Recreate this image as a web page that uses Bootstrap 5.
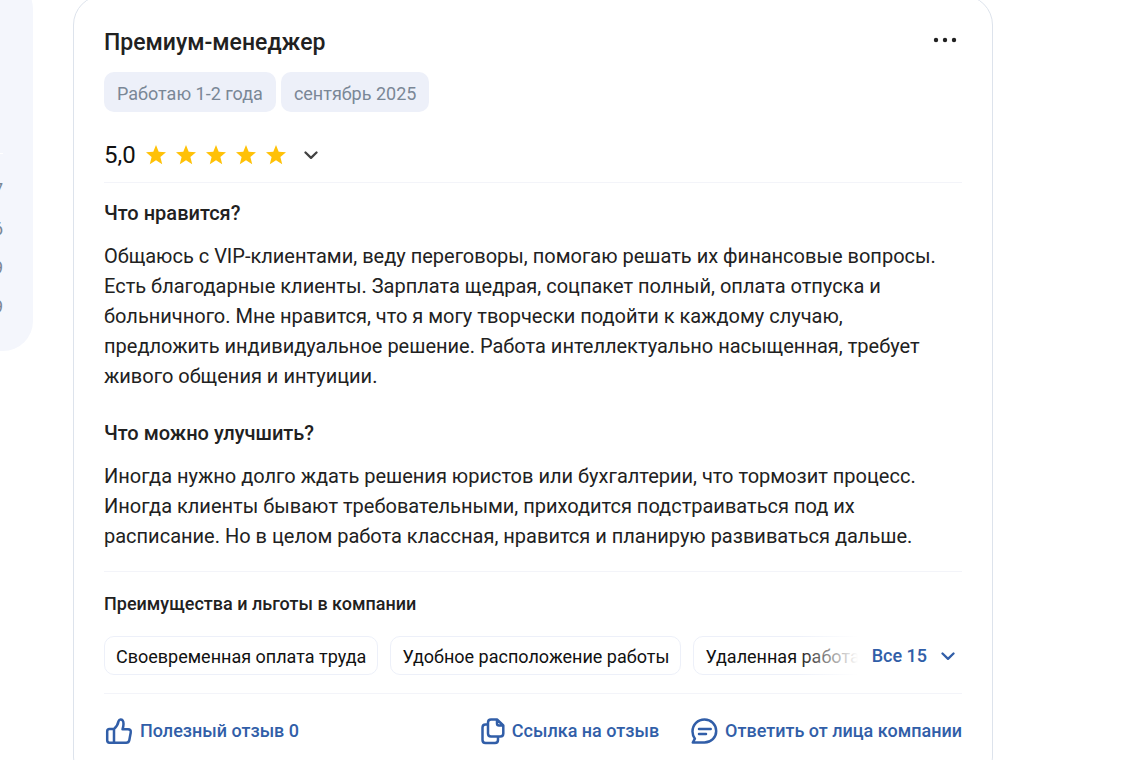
<!DOCTYPE html>
<html lang="ru">
<head>
<meta charset="utf-8">
<meta name="viewport" content="width=device-width, initial-scale=1">
<title>Премиум-менеджер — отзыв о работе</title>
<link href="https://cdn.jsdelivr.net/npm/bootstrap@5.3.0/dist/css/bootstrap.min.css" rel="stylesheet">
<style>
body { font-family: Roboto, "Liberation Sans", sans-serif; font-size: 20px; line-height: 30px; color: #212121; background: #fff; overflow: hidden; height: 100vh; }
.page { gap: 40px; padding-right: 147px; }
.side-panel { width: 300px; height: 372px; margin: -21px 0 0 -267px; padding: 0 30px 25px; background: #f4f6fc; border-radius: 30px; font-size: 18px; line-height: 39px; color: #7a8796; }
.side-first { border-top: 1px solid #fff; padding-top: 16px; }
.review { min-width: 0; margin-top: -5px; padding: 32px 30px 40px; border: 1px solid #dde3ec; border-radius: 30px; }
.review-title { font-size: 23px; line-height: 30px; font-weight: 500; }
.tag { padding: 7px 13px 3px; height: 40px; border-radius: 10px; background: #edf0f9; color: #7a8796; font-size: 18px; }
.tags { gap: 5px; margin-top: 14px; }
.rating { margin-top: 28px; padding-bottom: 12px; gap: 10px; }
.score { font-size: 24px; color: #111; }
.stars { gap: 10px; }
.ruled { border-bottom: 1px solid #f3f4f9; }
.section-title { font-size: 20px; line-height: 30px; font-weight: 500; margin: 15px 0 13px; }
.second { margin-top: 27px; }
.last-text { padding-bottom: 20px; }
.perks-title { font-size: 18px; line-height: 24px; font-weight: 500; margin: 20px 0; }
.perks-row { gap: 14px; padding-bottom: 18px; }
.perks { gap: 12px; height: 39px; min-width: 0; }
.perk { height: 39px; padding: 5px 11px 0; border: 1px solid #edf0f9; border-radius: 10px; font-size: 18px; color: #111; white-space: nowrap; flex: none; }
.perks-fade { position: absolute; inset: 0 0 0 auto; width: 62px; background: linear-gradient(90deg, #fff0, #fffc 80%, #fff); }
.action { border: 0; padding: 0; background: none; color: #315ea8; font-size: 18px; line-height: 30px; font-weight: 500; text-decoration: none; white-space: nowrap; }
.all-perks { gap: 14px; padding-right: 7px; }
.more { height: 24px; line-height: 24px; }
.scores-toggle { color: #424242; padding-left: 8px; }
.actions { margin-top: 22px; gap: 30px; }
.actions .action { display: flex; align-items: center; gap: 6px; }
svg { display: block; flex: none; }
.line-icon { fill: none; stroke: currentColor; stroke-width: 2.5; stroke-linecap: round; stroke-linejoin: round; }
</style>
</head>
<body>
<svg class="d-none" aria-hidden="true">
  <symbol id="star" viewBox="0 0 20 20"><path fill="#ffc107" d="M10 0l2.700 6.800 7.300.5-5.600 4.600 1.800 7.400-6.200-4-6.200 4 1.800-7.400L0 7.300l7.300-.5z"/></symbol>
  <symbol id="chevron" viewBox="0 0 14 14"><path fill="none" stroke="currentColor" stroke-width="2.300" stroke-linecap="round" stroke-linejoin="round" d="M1.500 4.500L7 9.800l5.500-5.300"/></symbol>
</svg>
<div class="page d-flex align-items-start">
  <aside class="side-panel d-flex flex-column justify-content-end flex-shrink-0 text-end"><span class="side-first">7</span><span>6</span><span>9</span><span>9</span></aside>
  <article class="review flex-grow-1">
    <header class="d-flex justify-content-between align-items-start">
      <h2 class="review-title mb-0">Премиум-менеджер</h2>
      <button class="action more" type="button" aria-label="Действия"><svg width="34" height="24" viewBox="0 0 34 24" fill="#212121"><circle cx="8" cy="12" r="2.200"/><circle cx="17" cy="12" r="2.200"/><circle cx="26" cy="12" r="2.200"/></svg></button>
    </header>
    <div class="tags d-flex"><span class="tag">Работаю 1-2 года</span><span class="tag">сентябрь 2025</span></div>
    <div class="rating ruled d-flex align-items-center">
      <span class="score">5,0</span>
      <span class="stars d-flex"><svg width="20" height="20"><use href="#star"/></svg><svg width="20" height="20"><use href="#star"/></svg><svg width="20" height="20"><use href="#star"/></svg><svg width="20" height="20"><use href="#star"/></svg><svg width="20" height="20"><use href="#star"/></svg></span>
      <button class="action scores-toggle" type="button" aria-label="Показать оценки"><svg width="14" height="14"><use href="#chevron"/></svg></button>
    </div>
    <h3 class="section-title">Что нравится?</h3>
    <p class="mb-0">Общаюсь с VIP-клиентами, веду переговоры, помогаю решать их финансовые вопросы. Есть благодарные клиенты. Зарплата щедрая, соцпакет полный, оплата отпуска и больничного. Мне нравится, что я могу творчески подойти к каждому случаю, предложить индивидуальное решение. Работа интеллектуально насыщенная, требует живого общения и интуиции.</p>
    <h3 class="section-title second">Что можно улучшить?</h3>
    <p class="ruled last-text mb-0">Иногда нужно долго ждать решения юристов или бухгалтерии, что тормозит процесс. Иногда клиенты бывают требовательными, приходится подстраиваться под их расписание. Но в целом работа классная, нравится и планирую развиваться дальше.</p>
    <h4 class="perks-title">Преимущества и льготы в компании</h4>
    <div class="perks-row ruled d-flex align-items-center">
      <div class="perks d-flex position-relative overflow-hidden flex-grow-1"><span class="perk">Своевременная оплата труда</span><span class="perk">Удобное расположение работы</span><span class="perk">Удаленная работа</span><span class="perks-fade"></span></div>
      <button class="action all-perks d-flex align-items-center" type="button">Все 15<svg width="14" height="14"><use href="#chevron"/></svg></button>
    </div>
    <footer class="actions d-flex">
      <button class="action me-auto" type="button"><svg class="line-icon" width="30" height="30" viewBox="0 0 30 30"><path d="M10 13H5.500Q3.200 13 3.200 15.300v9Q3.200 26.700 5.500 26.700H10M10 13v13.700h12.200q2.600 0 3.100-2.500l1.400-7.500q.6-3.400-2.700-3.400h-5.500q1-3 1-5.300 0-4.600-3-4.600-1.400 0-1.900 1.700Q13.700 10 10 13z"/></svg>Полезный отзыв 0</button>
      <a class="action" href="#"><svg class="line-icon" width="26" height="30" viewBox="0 0 26 30"><path d="M17 3.500h-6q-3 0-3 3v11q0 3 3 3h9.300q3 0 3-3v-8zM17 3.500v4q0 2 2 2h4.300M8 8.500H5.500q-3 0-3 3V24q0 3 3 3H15q3 0 3-3v-3"/></svg>Ссылка на отзыв</a>
      <a class="action" href="#"><svg class="line-icon" width="30" height="30" viewBox="0 0 30 30"><path d="M3.800 26.500l2.100-3.800q-2.400-3.300-2.400-7.200C3.500 8.500 8.800 3.500 15.500 3.500s11.700 5 11.700 11.500-5 11.500-11.700 11.500zM10 13.100h11.700M10 18h7"/></svg>Ответить от лица компании</a>
    </footer>
  </article>
</div>
<script src="https://cdn.jsdelivr.net/npm/bootstrap@5.3.0/dist/js/bootstrap.bundle.min.js"></script>
</body>
</html>
